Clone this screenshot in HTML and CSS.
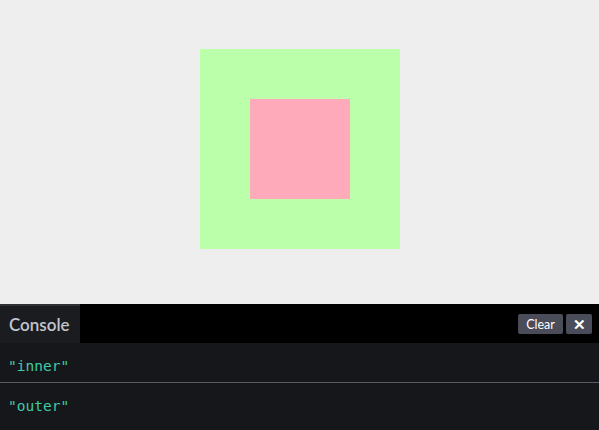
FILE: index.html
```html
<!DOCTYPE html>
<html>
<head>
<meta charset="utf-8">
<link rel="stylesheet" href="styles.css">
</head>
<body>
<div class="stage">
  <div class="outer"><div class="inner"></div></div>
</div>
<div class="console">
  <div class="bar">
    <div class="tab">Console</div>
    <div class="actions">
      <button class="btn clear">Clear</button>
      <button class="btn close">✕</button>
    </div>
  </div>
  <div class="row">"inner"</div>
  <div class="row">"outer"</div>
</div>
</body>
</html>
```
FILE: styles.css
```css
html, body { margin: 0; padding: 0; }
body { width: 599px; height: 430px; background: #eeeeee; overflow: hidden; font-family: Lato, "Open Sans", sans-serif; }
.stage { height: 304px; display: flex; justify-content: center; padding-top: 49px; box-sizing: border-box; }
.outer { width: 200px; height: 200px; background: #bbffaa; display: flex; align-items: center; justify-content: center; }
.inner { width: 100px; height: 100px; background: #ffaabb; }
.console { background: #16171b; height: 126px; }
.bar { height: 39px; background: #000; display: flex; justify-content: space-between; }
.tab { width: 80px; background: #1b1c20; border-top: 2px solid #2f3036; box-sizing: border-box; color: #c2c5cd; font-size: 17px; font-weight: 600; padding: 0 0 0 9px; line-height: 37px; }
.actions { display: flex; gap: 3px; padding: 10px 7px 0 0; }
.btn { height: 20px; border: 0; border-radius: 2px; background: #4a4c59; color: #fff; font-family: Lato, sans-serif; font-size: 12.5px; padding: 0; }
.clear { width: 45px; }
.close { width: 26px; font-size: 15px; font-weight: 700; }
.row { height: 39px; line-height: 46px; padding-left: 8px; font-family: "DejaVu Sans Mono", monospace; font-size: 14.5px; color: #3fcba4; }
.row + .row { border-top: 1px solid #5a5b60; height: 47px; }
```
